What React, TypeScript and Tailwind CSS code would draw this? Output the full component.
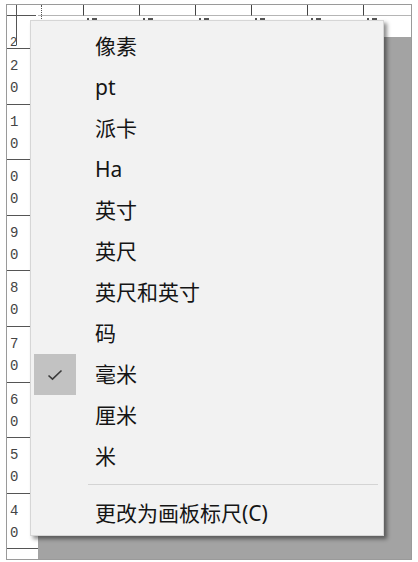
const units = [
  { label: "像素" },
  { label: "pt" },
  { label: "派卡" },
  { label: "Ha" },
  { label: "英寸" },
  { label: "英尺" },
  { label: "英尺和英寸" },
  { label: "码" },
  { label: "毫米", checked: true },
  { label: "厘米" },
  { label: "米" },
];

const sideLabels = ["2", "1", "0", "9", "8", "7", "6", "5", "4"];

function TopRuler() {
  return (
    <div className="flex h-[32px] flex-1 overflow-hidden bg-white">
      <div className="flex h-full w-[45px] shrink-0 flex-col">
        <div className="h-[11px] border-b border-[#b5b5b5] pl-[2px]">
          <div className="ml-[1px] h-[14px] border-l border-dotted border-[#555]" />
        </div>
      </div>
      {[0, 1, 2, 3, 4, 5].map((i) => (
        <div key={i} className="relative h-full w-[56px] shrink-0">
          <div className="h-[11px] border-b border-l border-[#b5b5b5] border-l-[#444]" />
          <div className="flex gap-[3px] pl-[4px] pt-[2px]">
            <span className="h-[2px] w-[2px] bg-[#555]" />
            <span className="h-[2px] w-[5px] bg-[#555]" />
          </div>
        </div>
      ))}
      <div className="flex h-full flex-1 items-end gap-[9px] pb-[1px] pl-[30px]">
        <span className="h-[6px] w-px bg-[#555]" />
        <span className="h-[6px] w-px bg-[#555]" />
      </div>
    </div>
  );
}

function SideRuler() {
  return (
    <div className="flex w-[31px] shrink-0 flex-col overflow-hidden bg-white font-['Liberation_Mono',monospace] text-[14px] leading-none text-[#444]">
      <div className="flex h-[11px] shrink-0 pl-[3px] text-[12px]">2</div>
      {sideLabels.map((d, i) => (
        <div
          key={i}
          className="flex h-[55.6px] shrink-0 flex-col gap-[8px] border-t border-[#555] pl-[3px] pt-[10px]"
        >
          <span>{d}</span>
          <span>0</span>
        </div>
      ))}
      <div className="h-[20px] shrink-0 border-t border-[#555]" />
    </div>
  );
}

function Check() {
  return (
    <svg width="16" height="12" viewBox="0 0 16 12" fill="none">
      <path d="M1.5 6.5 L5.5 10.2 L14.5 1.5" stroke="#3a3a3a" strokeWidth="1.6" />
    </svg>
  );
}

export default function App() {
  return (
    <div className="relative h-[562px] w-[418px] overflow-hidden bg-white">
      <div className="ml-[6px] mt-[4px] flex h-[556px] w-[406px] flex-col border border-[#9a9a9a]">
        {/* top row: corner + horizontal ruler */}
        <div className="flex h-[32px] shrink-0">
          <div className="relative h-full w-[31px] shrink-0 bg-white">
            <div className="h-[11px] w-[29px] border-b border-[#555]">
              <div className="ml-[9px] h-[40px] w-px bg-[#555]" />
            </div>
          </div>
          <TopRuler />
        </div>
        {/* body: vertical ruler + canvas */}
        <div className="flex min-h-0 flex-1">
          <SideRuler />
          <div className="flex-1 bg-[#a3a3a3]" />
        </div>
      </div>

      {/* ruler context menu */}
      <div className="absolute left-[30px] top-[20px] flex h-[516px] w-[354px] flex-col border border-[#d6d6d6] bg-[#f2f2f2] pt-[5px] shadow-[3px_3px_4px_rgba(0,0,0,0.45)] font-['Noto_Sans','Noto_Sans_CJK_SC',sans-serif] text-[21px] text-[#151515]">
        {units.map((u) => (
          <div key={u.label} className="flex h-[41px] shrink-0 items-center">
            <div
              className={
                "ml-[3px] flex h-[41px] w-[42px] items-center justify-center " +
                (u.checked ? "bg-[#c2c2c2]" : "")
              }
            >
              {u.checked && <Check />}
            </div>
            <span className="ml-[19px] leading-none">{u.label}</span>
          </div>
        ))}
        <div className="ml-[57px] mr-[5px] mt-[7px] h-px bg-[#d4d4d4]" />
        <div className="mt-[8px] flex h-[41px] shrink-0 items-center pl-[64px]">
          <span className="leading-none">更改为画板标尺(C)</span>
        </div>
      </div>
    </div>
  );
}
